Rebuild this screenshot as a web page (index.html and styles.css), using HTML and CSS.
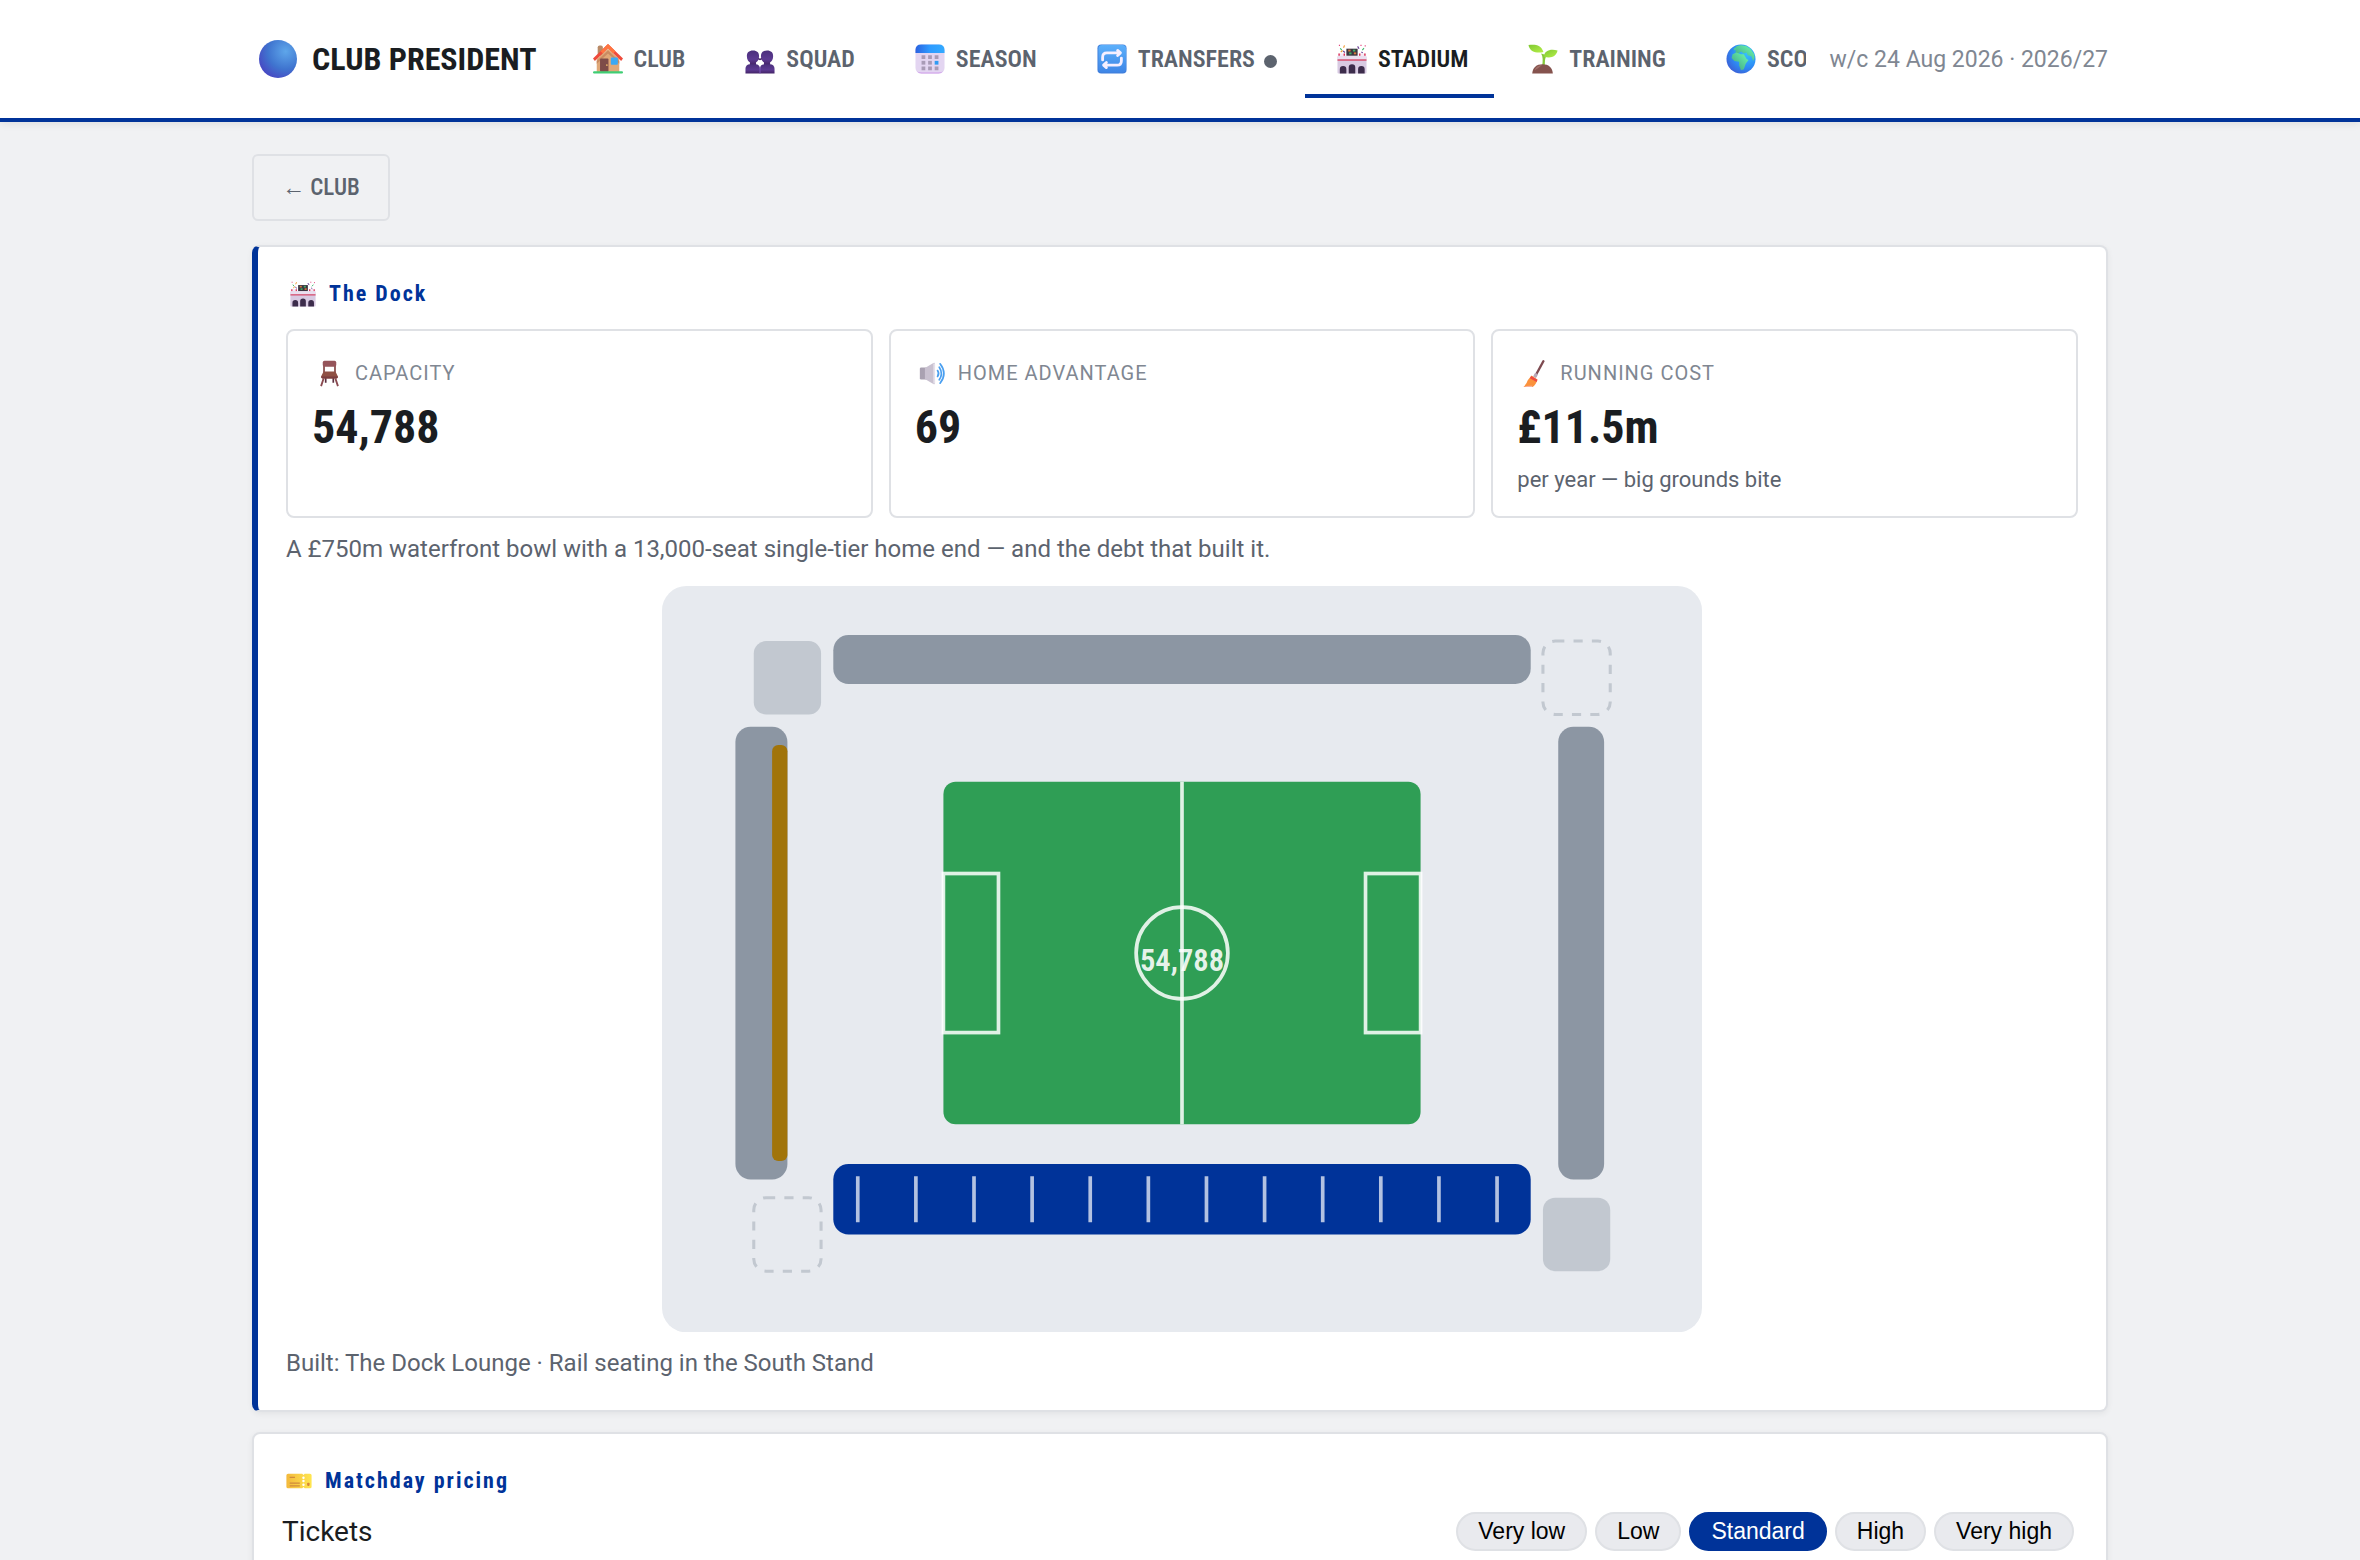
FILE: index.html
```html
<!DOCTYPE html>
<html lang="en-GB">
<head>
    <meta charset="UTF-8">
    <meta name="viewport" content="width=device-width, initial-scale=1">
    <link rel="stylesheet" href="styles.css">
    <title>Club President</title>
</head>

<body>
    <!-- icon sprite -->
    <svg class="sprite" aria-hidden="true">
        <defs>
            <radialGradient id="g-ball" cx="0.7" cy="0.3" r="0.85">
                <stop offset="0" stop-color="#5ea6ea"/>
                <stop offset="0.55" stop-color="#3f74cf"/>
                <stop offset="1" stop-color="#4a3fc0"/>
            </radialGradient>
            <linearGradient id="g-sky" x1="0" y1="0" x2="1" y2="0">
                <stop offset="0" stop-color="#2b62e0"/>
                <stop offset="0.5" stop-color="#2e9bff"/>
                <stop offset="1" stop-color="#33aaff"/>
            </linearGradient>
            <linearGradient id="g-repeat" x1="0" y1="0" x2="0" y2="1">
                <stop offset="0" stop-color="#5cb0fb"/>
                <stop offset="1" stop-color="#3f86e6"/>
            </linearGradient>
            <radialGradient id="g-globe" cx="0.7" cy="0.3" r="0.8">
                <stop offset="0" stop-color="#35c3ff"/>
                <stop offset="0.6" stop-color="#2d8cf5"/>
                <stop offset="1" stop-color="#3c5fd6"/>
            </radialGradient>
            <linearGradient id="g-land" x1="1" y1="0" x2="0" y2="1">
                <stop offset="0" stop-color="#6dffb0"/>
                <stop offset="1" stop-color="#3d9a80"/>
            </linearGradient>
            <linearGradient id="g-leaf" x1="0" y1="0" x2="1" y2="1">
                <stop offset="0" stop-color="#7fc832"/>
                <stop offset="1" stop-color="#b6f048"/>
            </linearGradient>
            <linearGradient id="g-ticket" x1="0" y1="0" x2="1" y2="0">
                <stop offset="0" stop-color="#f3b93c"/>
                <stop offset="1" stop-color="#ffe650"/>
            </linearGradient>
            <linearGradient id="g-bust" x1="0" y1="0" x2="0" y2="1">
                <stop offset="0" stop-color="#4a2f7c"/>
                <stop offset="0.6" stop-color="#5c3a92"/>
                <stop offset="1" stop-color="#432366"/>
            </linearGradient>
        </defs>

        <symbol id="i-ball" viewBox="0 0 32 32">
            <circle cx="16" cy="16" r="16" fill="url(#g-ball)"/>
        </symbol>

        <symbol id="i-club" viewBox="0 0 32 32">
            <path d="M5 3.500q0-2 2-2h1.500q2 0 2 2v9H5z" fill="#b98a66"/>
            <path d="M16 5 28 16v14H4V16z" fill="#e0a878"/>
            <path d="M4 18 16 7l12 11v3L16 10 4 21z" fill="#c98b62"/>
            <path d="M16 0 32 15.500 30 18 16 4.500 2 18 0 15.500z" fill="#ef4b3c"/>
            <path d="M16 0 24 7.800 21.500 10 16 4.500 10.500 10 8 7.800z" fill="#ff7540"/>
            <rect x="7.500" y="15.500" width="9" height="14" rx="1" fill="#7d4c48"/>
            <circle cx="14.800" cy="22.500" r="0.900" fill="#f0c06a"/>
            <rect x="19" y="14.500" width="7.500" height="7.500" rx="1" fill="#3aa9f5"/>
            <rect x="0" y="29" width="32" height="2.500" rx="1.200" fill="#3fce74"/>
        </symbol>

        <symbol id="i-squad" viewBox="0 0 32 32">
            <g fill="url(#g-bust)">
                <path d="M8.500 7c4.500 0 6.500 2.400 6.500 6 0 3.600-1.600 5.600-3.200 6.500v3H5.200v-3C3.600 18.600 2 16.600 2 13c0-3.600 2-6 6.500-6z"/>
                <path d="M23.500 7c-4.500 0-6.500 2.400-6.500 6 0 3.600 1.600 5.600 3.200 6.500v3h6.600v-3c1.600-.9 3.200-2.900 3.200-6.500 0-3.600-2-6-6.500-6z"/>
                <path d="M0.500 31.500v-5q0-5 5-5h5.500q5 0 5 5v5z"/>
                <path d="M16 31.500v-5q0-5 5-5h5.500q5 0 5 5v5z"/>
            </g>
            <path d="M14 15.500l2 1 2-1" stroke="#432366" stroke-width="1.500" fill="none"/>
            <path d="M16 25v6.500" stroke="#8158bd" stroke-width="1"/>
        </symbol>

        <symbol id="i-season" viewBox="0 0 32 32">
            <rect x="0.500" y="0.500" width="31" height="31" rx="6" fill="#e3d5f1"/>
            <path d="M0.500 9.500V6.500q0-6 6-6h19q6 0 6 6v3z" fill="url(#g-sky)"/>
            <path d="M2 29q2 2.500 5 2.500h18q3 0 5-2.500-2 1.500-5 1.500H7q-3 0-5-1.500z" fill="#cf9bea"/>
            <g fill="#a99bb6">
                <rect x="7" y="12" width="4" height="4"/><rect x="14" y="12" width="4" height="4"/><rect x="21" y="12" width="4" height="4"/>
                <rect x="7" y="18" width="4" height="4"/><rect x="14" y="18" width="4" height="4"/>
                <rect x="7" y="24" width="4" height="4"/><rect x="14" y="24" width="4" height="4"/><rect x="21" y="24" width="4" height="4"/>
            </g>
            <rect x="21" y="18" width="4" height="4" fill="#2f9bf3"/>
        </symbol>

        <symbol id="i-transfers" viewBox="0 0 32 32">
            <rect x="0.500" y="0.500" width="31" height="31" rx="4" fill="#3f7fdc"/>
            <rect x="1.500" y="1" width="29.500" height="29" rx="4" fill="url(#g-repeat)"/>
            <g fill="none" stroke="#f6efff" stroke-width="3" stroke-linecap="round" stroke-linejoin="round">
                <path d="M6 17v-3q0-4.500 4.500-4.500H24M22 6.800l3 2.700-3 2.700"/>
                <path d="M26 15v3q0 4.500-4.500 4.500H8M10 19.800l-3 2.700 3 2.700"/>
            </g>
        </symbol>

        <symbol id="i-stadium" viewBox="0 0 32 32">
            <rect x="10" y="5" width="12" height="7.500" fill="#3b3540"/>
            <rect x="12" y="6" width="2.500" height="2" fill="#d8783c"/><rect x="17" y="6" width="2.500" height="2" fill="#3fae66"/>
            <rect x="13" y="9" width="2.500" height="2" fill="#3fae66"/><rect x="18" y="9" width="2.500" height="2" fill="#d8783c"/>
            <path d="M1 10h8v3H1zM23 10h8v3h-8z" fill="#f4e9f4"/>
            <path d="M1.500 10h1.500v2.500H1.500zM7 10h1.500v2.500H7zM23.500 10h1.500v2.500h-1.500zM29 10h1.500v2.500H29z" fill="#dd2e55"/>
            <path d="M3.500 4.500 5 6.500M27 6.500l1.800-2" stroke="#3fb56b" stroke-width="1.200"/>
            <path d="M8 1.500 7 4M4 8.500l2-1.500" stroke="#f29a2e" stroke-width="1.200"/>
            <path d="M22 2.500 23.500 5M6.500 7.500 8.500 9M26 8.500l1.500 1" stroke="#6b3f96" stroke-width="1.200"/>
            <path d="M2 1.500h1.200M29.500 2h1.200M25 1.500h1.200" stroke="#e2457b" stroke-width="1.200"/>
            <rect x="0.500" y="13" width="31" height="18.500" rx="1" fill="#d8cae2"/>
            <rect x="0.500" y="13" width="31" height="3" fill="#eadff0"/>
            <rect x="0.500" y="16.500" width="31" height="1.200" fill="#d92b4c"/>
            <path d="M3 31.500v-4.500a3.500 3.500 0 0 1 7 0v4.500zM12.500 31.500v-6.500a3.500 3.500 0 0 1 7 0v6.500zM22.500 31.500v-4.500a3.500 3.500 0 0 1 7 0v4.500z" fill="#3c2c4b"/>
        </symbol>

        <symbol id="i-training" viewBox="0 0 32 32">
            <path d="M14 10c2 3 2 8 1 14h3c0-6 0-9 2-12z" fill="#86c83a"/>
            <path d="M0.500 1C8 0 14 1 16.500 8.500 10 10 2 9 0.500 1z" fill="url(#g-leaf)"/>
            <path d="M31.500 7C24 5 17.500 7 17 13.500c7 2 13 0.500 14.500-6.500z" fill="url(#g-leaf)"/>
            <path d="M4.500 31.500C5 25 9 21.500 15.500 21.500S26 25 26.500 31.500z" fill="#85534e"/>
            <path d="M7 28q2-5 8-5.500-3 3-8 5.500z" fill="#a3716a"/>
        </symbol>

        <symbol id="i-scouting" viewBox="0 0 32 32">
            <circle cx="16" cy="16" r="15.500" fill="url(#g-globe)"/>
            <path d="M11 2.500q8-3 15 2.500l4 6q1 5-1 7l-2-5-4-1-1-3-3 1-3-2-3 2-3-1z" fill="url(#g-land)"/>
            <path d="M7 11l4-2 5 2 3 0 3 5 2 1-3 4-2 6-3 1-2-5v-4l-5-1-3-3z" fill="url(#g-land)"/>
            <path d="M8 5l3-2 1 2-3 2z" fill="#4bc99a"/>
        </symbol>

        <symbol id="i-chair" viewBox="0 0 32 32">
            <path d="M9.500 5v10M22.500 5v10" stroke="#844746" stroke-width="2"/>
            <rect x="8" y="1" width="16" height="7" rx="2" fill="#96555a"/>
            <path d="M9 22 6 31M23 22l3 9" stroke="#8a4a50" stroke-width="2.200"/>
            <path d="M11.500 21v6M20.500 21v6" stroke="#5a2f3e" stroke-width="2"/>
            <path d="M9 13.500h14l3 6q0 2.500-2 2.500H8q-2 0-2-2.500z" fill="#8f5044"/>
            <path d="M6 19.500h20q0 2.500-2 2.500H8q-2 0-2-2.500z" fill="#7a3d3f"/>
        </symbol>

        <symbol id="i-sound" viewBox="0 0 32 32">
            <rect x="1" y="9" width="9" height="14" rx="1.500" fill="#a9a1b1"/>
            <path d="M7 9.500 17 3.500q2-1 2 1v23q0 2-2 1L7 22.500z" fill="#c9c1d0"/>
            <path d="M18 4v24" stroke="#e6e0ea" stroke-width="2"/>
            <g fill="none" stroke="#4a9ff0" stroke-width="2" stroke-linecap="round">
                <path d="M22 12.500q2.500 3.500 0 7"/>
                <path d="M24 8.500q5 7.500 0 15"/>
                <path d="M25 4.500q9 11.500 0 23"/>
            </g>
        </symbol>

        <symbol id="i-broom" viewBox="0 0 32 32">
            <path d="M26.500 1.500 17 19" stroke="#7d4a50" stroke-width="2.800" stroke-linecap="round"/>
            <path d="M18.500 16 16 20.500" stroke="#b9a9b8" stroke-width="4"/>
            <path d="M12.500 18.500l7 4.500q-2 7-6 9H3q4-4 5-8z" fill="#fb923c"/>
            <path d="M12 19l7.500 4.500-1 2.500-8-4.500z" fill="#ef4a42"/>
            <path d="M3 32q4-2 10.500-1.500L13 32z" fill="#f9b3a0"/>
        </symbol>

        <symbol id="i-ticket" viewBox="0 0 32 32">
            <path d="M2.500 7H20l1.500 1.500L23 7h6.500Q31.500 7 31.500 9v14q0 2-2 2H23l-1.500-1.500L20 25H2.500q-2 0-2-2V9q0-2 2-2z" fill="url(#g-ticket)"/>
            <path d="M4.500 11.500H11M4.500 18.500H17M4.500 22H17" stroke="#d08a3c" stroke-width="1.500"/>
            <g fill="#fff"><circle cx="21.500" cy="12" r="1.500"/><circle cx="21.500" cy="16" r="1.500"/><circle cx="21.500" cy="20.500" r="1.500"/></g>
            <rect x="26" y="18" width="3" height="4" rx="1" fill="#d9853a"/>
        </symbol>
    </svg>

    <header class="topbar">
        <div class="topbar-inner">
            <div class="brand">
                <svg class="brand-icon" aria-hidden="true"><use href="#i-ball"/></svg>
                <span>CLUB PRESIDENT</span>
            </div>
            <nav class="tabs">
                <a class="tab" href="#club"><svg class="icon" aria-hidden="true"><use href="#i-club"/></svg>CLUB</a>
                <a class="tab" href="#squad"><svg class="icon" aria-hidden="true"><use href="#i-squad"/></svg>SQUAD</a>
                <a class="tab" href="#season"><svg class="icon" aria-hidden="true"><use href="#i-season"/></svg>SEASON</a>
                <a class="tab" href="#transfers"><svg class="icon" aria-hidden="true"><use href="#i-transfers"/></svg>TRANSFERS<span class="dot"></span></a>
                <a class="tab active" href="#stadium"><svg class="icon" aria-hidden="true"><use href="#i-stadium"/></svg>STADIUM</a>
                <a class="tab" href="#training"><svg class="icon" aria-hidden="true"><use href="#i-training"/></svg>TRAINING</a>
                <a class="tab" href="#scouting"><svg class="icon" aria-hidden="true"><use href="#i-scouting"/></svg>SCOUTING</a>
            </nav>
            <div class="date">w/c 24 Aug 2026 · 2026/27</div>
        </div>
    </header>

    <main class="page">
        <button class="back" type="button">← CLUB</button>

        <section class="card accent">
            <h2 class="card-title"><svg class="icon" aria-hidden="true"><use href="#i-stadium"/></svg>The Dock</h2>
            <div class="stats">
                <div class="stat">
                    <div class="stat-label"><svg class="icon" aria-hidden="true"><use href="#i-chair"/></svg>CAPACITY</div>
                    <div class="stat-value">54,788</div>
                </div>
                <div class="stat">
                    <div class="stat-label"><svg class="icon" aria-hidden="true"><use href="#i-sound"/></svg>HOME ADVANTAGE</div>
                    <div class="stat-value">69</div>
                </div>
                <div class="stat">
                    <div class="stat-label"><svg class="icon" aria-hidden="true"><use href="#i-broom"/></svg>RUNNING COST</div>
                    <div class="stat-value">£11.5m</div>
                    <div class="stat-sub">per year — big grounds bite</div>
                </div>
            </div>
            <p class="note">A £750m waterfront bowl with a 13,000-seat single-tier home end — and the debt that built it.</p>

            <svg class="ground" viewBox="0 0 340 244" role="img" aria-label="Stadium plan">
                <rect width="340" height="244" rx="8" fill="#e7eaef"/>
                <!-- corners -->
                <rect class="corner" x="30" y="18" width="22" height="24" rx="4"/>
                <rect class="corner empty" x="288" y="18" width="22" height="24" rx="4"/>
                <rect class="corner empty" x="30" y="200" width="22" height="24" rx="4"/>
                <rect class="corner" x="288" y="200" width="22" height="24" rx="4"/>
                <!-- stands -->
                <rect class="stand" x="56" y="16" width="228" height="16" rx="5"/>
                <rect class="stand" x="24" y="46" width="17" height="148" rx="5"/>
                <rect class="stand" x="293" y="46" width="15" height="148" rx="5"/>
                <rect class="lounge" x="36" y="52" width="5" height="136" rx="2"/>
                <rect class="stand home" x="56" y="189" width="228" height="23" rx="5"/>
                <path class="rails" d="M64 193v15M83 193v15M102 193v15M121 193v15M140 193v15M159 193v15M178 193v15M197 193v15M216 193v15M235 193v15M254 193v15M273 193v15"/>
                <!-- pitch -->
                <rect class="grass" x="92" y="64" width="156" height="112" rx="4"/>
                <g class="lines">
                    <line x1="170" y1="64" x2="170" y2="176"/>
                    <circle cx="170" cy="120" r="15"/>
                    <rect x="92" y="94" width="18" height="52"/>
                    <rect x="230" y="94" width="18" height="52"/>
                </g>
                <text class="seats" x="170" y="126">54,788</text>
            </svg>

            <p class="built">Built: The Dock Lounge · Rail seating in the South Stand</p>
        </section>

        <section class="card">
            <h2 class="card-title"><svg class="icon" aria-hidden="true"><use href="#i-ticket"/></svg>Matchday pricing</h2>
            <div class="price-row">
                <span>Tickets</span>
                <div class="chips">
                    <button class="chip" type="button">Very low</button>
                    <button class="chip" type="button">Low</button>
                    <button class="chip on" type="button">Standard</button>
                    <button class="chip" type="button">High</button>
                    <button class="chip" type="button">Very high</button>
                </div>
            </div>
        </section>
    </main>
</body>
</html>
```
FILE: styles.css
```css
:root {
    --blue: #003399;
    --ink: #1a1d21;
    --mid: #5c636e;
    --soft: #808792;
    --line: #dfe1e5;
    --body: Roboto, "Liberation Sans", sans-serif;
    --narrow: "Roboto Condensed", "Liberation Sans Narrow", "Liberation Sans", sans-serif;
}

* {
    box-sizing: border-box;
}

body {
    margin: 0;
    background: #f0f1f3;
    color: var(--ink);
    font-family: var(--body);
    font-size: 24px;
}

.sprite {
    position: absolute;
    width: 0;
    height: 0;
}

.topbar {
    background: #fff;
    border-bottom: 4px solid var(--blue);
    box-shadow: 0 2px 8px rgba(0, 0, 0, 0.08);
}

.topbar-inner {
    display: flex;
    align-items: center;
    gap: 24px;
    max-width: 1920px;
    margin: 0 auto;
    padding: 20px 32px;
}

.brand {
    display: flex;
    align-items: center;
    gap: 15px;
    padding-left: 7px;
    font-family: var(--narrow);
    font-size: 32px;
    font-weight: 700;
    white-space: nowrap;
}

.brand-icon {
    width: 38px;
    height: 38px;
}

.tabs {
    display: flex;
    flex: 1;
    gap: 2px;
    min-width: 0;
    overflow: hidden;
}

.tab {
    display: flex;
    flex: none;
    align-items: center;
    height: 78px;
    padding: 4px 26px 0 32px;
    border-bottom: 4px solid transparent;
    color: var(--mid);
    font-family: var(--narrow);
    font-size: 24px;
    font-weight: 600;
    text-decoration: none;
}

.tab .icon {
    width: 30px;
    height: 30px;
    margin-right: 11px;
}

.tab.active {
    border-bottom-color: var(--blue);
    color: var(--ink);
}

.dot {
    width: 13px;
    height: 13px;
    margin: 4px 0 0 9px;
    border-radius: 50%;
    background: var(--mid);
}

.date {
    flex: none;
    color: var(--soft);
    font-size: 23px;
}

.page {
    max-width: 1920px;
    margin: 0 auto;
    padding: 32px;
}

.back {
    display: block;
    height: 67px;
    margin-bottom: 24px;
    padding: 0 28px;
    border: 2px solid var(--line);
    border-radius: 6px;
    background: transparent;
    color: var(--mid);
    font-family: var(--narrow);
    font-size: 23px;
    font-weight: 500;
}

.card {
    margin-bottom: 20px;
    padding: 28px;
    border: 2px solid var(--line);
    border-radius: 8px;
    background: #fff;
    box-shadow: 0 2px 6px rgba(0, 0, 0, 0.06);
}

.card.accent {
    border-left: 6px solid var(--blue);
}

.card-title {
    display: flex;
    align-items: center;
    margin: 0 0 12px;
    padding-left: 4px;
    color: var(--blue);
    font-family: var(--narrow);
    font-size: 22px;
    font-weight: 700;
    line-height: 38px;
    letter-spacing: 2px;
}

.card-title .icon {
    width: 26px;
    height: 26px;
    margin-right: 13px;
}

.stats {
    display: grid;
    grid-template-columns: repeat(3, 1fr);
    gap: 16px;
    margin-top: 16px;
}

.stat {
    padding: 24px 24px 20px;
    border: 2px solid var(--line);
    border-radius: 8px;
}

.stat-label {
    display: flex;
    align-items: center;
    padding-left: 4px;
    color: var(--soft);
    font-size: 20px;
    line-height: 36px;
    letter-spacing: 1px;
}

.stat-label .icon {
    width: 27px;
    height: 27px;
    margin-right: 12px;
}

.stat-value {
    font-family: var(--narrow);
    font-size: 46px;
    font-weight: 700;
    line-height: 72px;
}

.stat-sub {
    color: var(--mid);
    font-size: 22px;
    line-height: 33px;
}

.note,
.built {
    margin: 12px 0 18px;
    color: var(--mid);
    line-height: 38px;
}

.built {
    margin-bottom: 0;
}

.ground {
    display: block;
    width: 100%;
    max-width: 1040px;
    margin: 0 auto;
}

.stand {
    fill: #8c96a3;
}

.stand.home {
    fill: var(--blue);
}

.lounge {
    fill: #a1740a;
}

.corner {
    fill: #c2c8d0;
}

.corner.empty {
    fill: none;
    stroke: #c2c8d0;
    stroke-width: 1;
    stroke-dasharray: 3 3;
}

.rails {
    stroke: #fff;
    stroke-opacity: 0.7;
    stroke-width: 1.2;
}

.grass {
    fill: #2f9e55;
}

.lines {
    fill: none;
    stroke: #fff;
    stroke-opacity: 0.85;
    stroke-width: 1.2;
}

.seats {
    fill: #fff;
    fill-opacity: 0.9;
    font-family: var(--narrow);
    font-size: 10px;
    font-weight: 600;
    text-anchor: middle;
}

.price-row {
    display: flex;
    align-items: center;
    justify-content: space-between;
    font-size: 28px;
}

.chips {
    display: flex;
    gap: 8px;
    padding-right: 4px;
}

.chip {
    height: 39px;
    padding: 0 20px;
    border: 2px solid var(--line);
    border-radius: 20px;
    background: #e9eaee;
    color: #000;
    font-family: "Liberation Sans", sans-serif;
    font-size: 23px;
}

.chip.on {
    border-color: var(--blue);
    background: var(--blue);
    color: #fff;
}
```
